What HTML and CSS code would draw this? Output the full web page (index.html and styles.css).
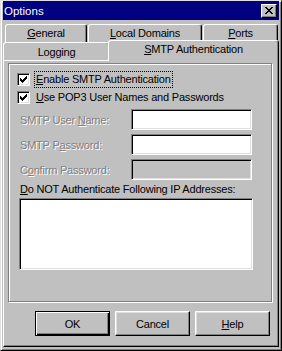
FILE: index.html
```html
<!DOCTYPE html>
<html lang="en">
<head>
    <meta charset="UTF-8">
    <meta name="viewport" content="width=device-width, initial-scale=1.0">
    <title>Options</title>
    <link rel="stylesheet" href="styles.css">
</head>
<body>
    <div class="window">
        <div class="titlebar">
            <span class="title">Options</span>
            <button class="close-btn" aria-label="Close">
                <svg width="8" height="7" viewBox="0 0 8 7" shape-rendering="crispEdges">
                    <path fill="#000" d="M0 0h2v1h-2z M6 0h2v1h-2z M1 1h2v1h-2z M5 1h2v1h-2z M2 2h4v1h-4z M3 3h2v1h-2z M2 4h4v1h-4z M1 5h2v1h-2z M5 5h2v1h-2z M0 6h2v1h-2z M6 6h2v1h-2z"/>
                </svg>
            </button>
        </div>

        <div class="tab-row back">
            <div class="tab tab-general"><u>G</u>eneral</div>
            <div class="tab tab-domains"><u>L</u>ocal Domains</div>
            <div class="tab tab-ports"><u>P</u>orts</div>
        </div>
        <div class="tab-row front">
            <div class="tab tab-logging">Logging</div>
            <div class="tab tab-smtp"><u>S</u>MTP Authentication</div>
        </div>

        <div class="panel">
            <div class="frame">
                <div class="check-row">
                    <span class="checkbox">
                        <svg width="7" height="7" viewBox="0 0 7 7" shape-rendering="crispEdges">
                            <path fill="#000" d="M0 2h1v3h-1z M1 3h1v3h-1z M2 4h1v3h-1z M3 3h1v3h-1z M4 2h1v3h-1z M5 1h1v3h-1z M6 0h1v3h-1z"/>
                        </svg>
                    </span>
                    <span class="check-label focus"><u>E</u>nable SMTP Authentication</span>
                </div>
                <div class="check-row">
                    <span class="checkbox">
                        <svg width="7" height="7" viewBox="0 0 7 7" shape-rendering="crispEdges">
                            <path fill="#000" d="M0 2h1v3h-1z M1 3h1v3h-1z M2 4h1v3h-1z M3 3h1v3h-1z M4 2h1v3h-1z M5 1h1v3h-1z M6 0h1v3h-1z"/>
                        </svg>
                    </span>
                    <span class="check-label"><u>U</u>se POP3 User Names and Passwords</span>
                </div>

                <div class="fields">
                    <div class="field-row">
                        <span class="field-label">SMTP User <u>N</u>ame:</span>
                        <span class="textbox"></span>
                    </div>
                    <div class="field-row">
                        <span class="field-label">SMTP P<u>a</u>ssword:</span>
                        <span class="textbox"></span>
                    </div>
                    <div class="field-row">
                        <span class="field-label">C<u>o</u>nfirm Password:</span>
                        <span class="textbox disabled"></span>
                    </div>
                </div>

                <div class="list-label"><u>D</u>o NOT Authenticate Following IP Addresses:</div>
                <div class="listbox"></div>
            </div>

            <div class="buttons">
                <button class="btn default">OK</button>
                <button class="btn">Cancel</button>
                <button class="btn"><u>H</u>elp</button>
            </div>
        </div>
    </div>
</body>
</html>
```

FILE: styles.css
```css
* {
    margin: 0;
    padding: 0;
    box-sizing: border-box;
}

body {
    width: 282px;
    height: 351px;
    font-family: "Liberation Sans", Arial, sans-serif;
    font-size: 11px;
    letter-spacing: -0.2px;
    color: #000;
    background: #c0c0c0;
    overflow: hidden;
}

u {
    text-decoration: underline;
}

.window {
    width: 282px;
    height: 351px;
    display: flex;
    flex-direction: column;
    background: #c0c0c0;
    border: 1px solid;
    border-color: #dfdfdf #000 #000 #dfdfdf;
    box-shadow: inset 1px 1px #fff, inset -1px -1px #808080;
    padding: 0 2px 3px 2px;
}

/* title bar */
.titlebar {
    height: 19px;
    flex-shrink: 0;
    display: flex;
    align-items: center;
    justify-content: space-between;
    background: #000080;
    color: #fff;
    padding: 0 2px 0 1px;
}

.title {
    font-size: 11.5px;
    letter-spacing: 0;
}

.close-btn {
    width: 16px;
    height: 14px;
    display: flex;
    align-items: center;
    justify-content: center;
    background: #c0c0c0;
    border: 1px solid;
    border-color: #fff #000 #000 #fff;
    box-shadow: inset -1px -1px #808080;
}

/* tabs */
.tab-row {
    display: flex;
    align-items: flex-start;
    height: 18px;
    flex-shrink: 0;
}

.tab-row.back {
    margin-top: 4px;
    padding-left: 2px;
    gap: 1px;
}

.tab {
    height: 18px;
    background: #c0c0c0;
    border: 1px solid;
    border-bottom: 0;
    border-color: #fff #000 #fff #fff;
    border-radius: 3px 3px 0 0;
    box-shadow: inset -1px 0 #808080;
    text-align: center;
    line-height: 16px;
    white-space: nowrap;
}

.tab-general { width: 82px; }
.tab-domains { width: 114px; }
.tab-ports { width: 75px; }

.tab-logging {
    width: 107px;
    padding-top: 1px;
}

.tab-smtp {
    width: 171px;
    height: 21px;
    margin-left: -2px;
    margin-top: -2px;
    position: relative;
    z-index: 1;
}

/* page */
.panel {
    flex-shrink: 0;
    border: 1px solid;
    border-color: #fff #000 #000 #fff;
    box-shadow: inset -1px -1px #808080;
    padding: 2px 6px 10px 4px;
}

.frame {
    height: 239px;
    border: 1px solid #808080;
    box-shadow: inset 1px 1px #fff, 1px 1px #fff;
    padding: 6px 0 0 8px;
}

.check-row {
    display: flex;
    align-items: flex-start;
    height: 18px;
}

.checkbox {
    width: 13px;
    height: 13px;
    margin-top: 3px;
    margin-right: 4px;
    display: flex;
    align-items: center;
    justify-content: center;
    background: #fff;
    border: 1px solid;
    border-color: #808080 #fff #fff #808080;
    box-shadow: inset 1px 1px #000, inset -1px -1px #dfdfdf;
}

.check-label {
    margin-top: 1px;
    height: 17px;
    line-height: 15px;
    padding: 0 1px;
    border: 1px dotted transparent;
    white-space: nowrap;
}

.check-label.focus {
    border-color: #000;
}

.fields {
    margin-top: 3px;
    display: flex;
    flex-direction: column;
    gap: 4px;
}

.field-row {
    display: flex;
    align-items: center;
    height: 21px;
}

.field-label {
    width: 111px;
    margin-left: 3px;
    color: #808080;
    text-shadow: 1px 1px #fff;
    white-space: nowrap;
}

.textbox,
.listbox {
    background: #fff;
    border: 1px solid;
    border-color: #808080 #fff #fff #808080;
    box-shadow: inset 1px 1px #000, inset -1px -1px #dfdfdf;
}

.textbox {
    width: 121px;
    height: 21px;
}

.textbox.disabled {
    background: #c0c0c0;
}

.list-label {
    height: 18px;
    line-height: 18px;
    margin-left: 3px;
    white-space: nowrap;
}

.listbox {
    width: 234px;
    height: 72px;
    margin-left: 2px;
}

/* dialog buttons */
.buttons {
    display: flex;
    justify-content: flex-end;
    gap: 5px;
    margin-top: 9px;
    padding-right: 2px;
}

.btn {
    width: 75px;
    height: 25px;
    font: inherit;
    letter-spacing: inherit;
    color: #000;
    background: #c0c0c0;
    border: 1px solid;
    border-color: #fff #000 #000 #fff;
    box-shadow: inset -1px -1px #808080, inset 1px 1px #dfdfdf;
}

.btn.default {
    border-color: #000;
    box-shadow: inset 1px 1px #fff, inset -1px -1px #000, inset -2px -2px #808080;
}
```
